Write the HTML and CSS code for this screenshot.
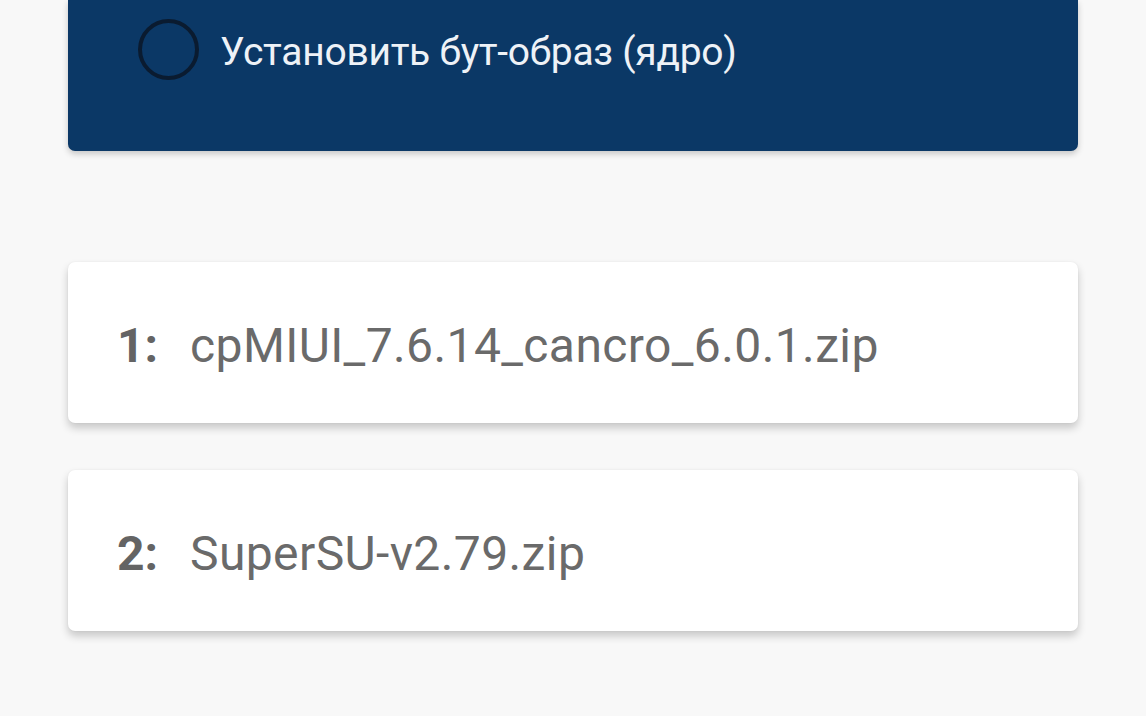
FILE: index.html
```html
<!DOCTYPE html>
<html lang="ru">
<head>
<meta charset="utf-8">
<link rel="stylesheet" href="styles.css">
</head>
<body>
<main class="page">
  <section class="option-card">
    <label class="option">
      <span class="radio"></span>
      <span class="option-text">Установить бут-образ (ядро)</span>
    </label>
  </section>
  <ol class="files">
    <li class="file-card"><span class="num">1:</span><span class="name">cpMIUI_7.6.14_cancro_6.0.1.zip</span></li>
    <li class="file-card"><span class="num">2:</span><span class="name">SuperSU-v2.79.zip</span></li>
  </ol>
</main>
</body>
</html>
```
FILE: styles.css
```css
html, body {
  margin: 0;
  padding: 0;
  background: #f8f8f8;
  font-family: Roboto, "Liberation Sans", sans-serif;
}
.page {
  width: 1010px;
  margin: 0 0 0 68px;
  padding-bottom: 84px;
  display: flex;
  flex-direction: column;
}
.option-card {
  background: #0b3866;
  border-radius: 0 0 7px 7px;
  height: 151px;
  box-shadow: 0 3px 6px rgba(0,0,0,0.2);
  display: flex;
  align-items: flex-start;
}
.option {
  display: flex;
  align-items: center;
  margin: 19px 0 0 70px;
  gap: 21px;
}
.radio {
  width: 53px;
  height: 53px;
  border: 4.5px solid #0a1b30;
  border-radius: 50%;
}
.option-text {
  color: #eef2f7;
  font-size: 39px;
  letter-spacing: -0.28px;
  padding-top: 5px;
}
.files {
  list-style: none;
  margin: 111px 0 0 0;
  padding: 0;
  display: flex;
  flex-direction: column;
  gap: 47px;
}
.file-card {
  background: #ffffff;
  height: 161px;
  border-radius: 7px;
  box-shadow: 0 5px 8px rgba(0,0,0,0.2), 0 0 2px rgba(0,0,0,0.06);
  display: flex;
  align-items: center;
  padding-left: 49px;
  padding-top: 6px;
  box-sizing: border-box;
  color: #6a6a6a;
  font-size: 48px;
}
.num {
  font-weight: 700;
  width: 73px;
  color: #646464;
}
.name {
  letter-spacing: 0.4px;
}
```
